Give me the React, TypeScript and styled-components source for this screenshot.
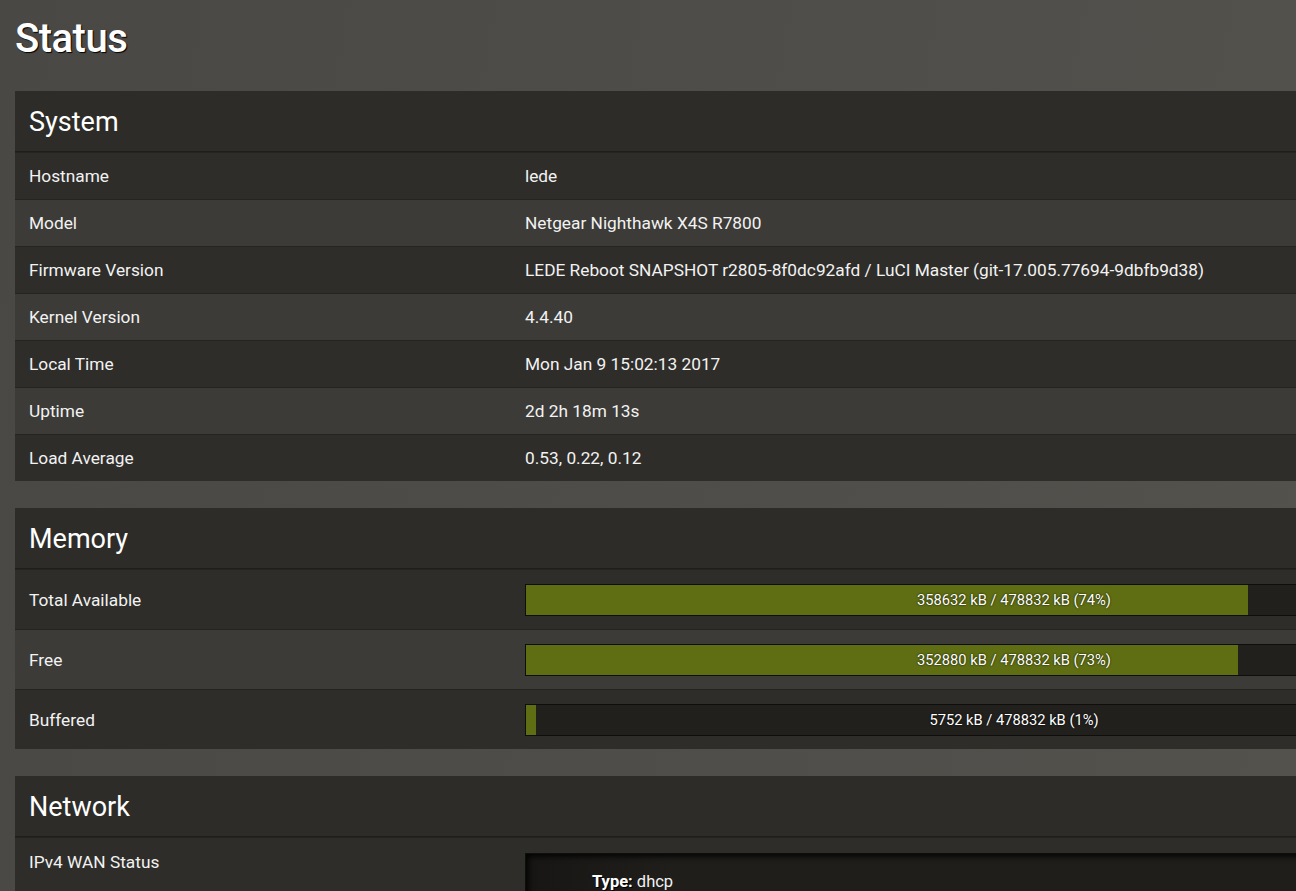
import React from "react";
import styled, { createGlobalStyle } from "styled-components";

const GlobalStyle = createGlobalStyle`
    html, body {
        margin:0;
        padding:0;
        overflow:hidden;
        background:linear-gradient(100deg, #4a4845 0%, #4f4d49 50%, #53524d 100%);
        min-height:100vh;
        font-family:Roboto, "Open Sans", "DejaVu Sans", sans-serif;
        color:#eee;
    }
`
const Page = styled.div`
    padding:14px 0 0 15px;
    width:1500px;
`
const Title = styled.h1`
    margin:0 0 27px 0;
    font-size:40px;
    font-weight:500;
    line-height:50px;
    color:#fff;
    letter-spacing:-0.5px;
    text-shadow:1px 1px 1px #000;
`
const Panel = styled.section`
    background:#2e2c28;
    margin-bottom:27px;
    width:1520px;
`
const PanelHeader = styled.h2`
    margin:0;
    height:61px;
    padding:2px 14px 0;
    box-sizing:border-box;
    display:flex;
    align-items:center;
    font-size:27px;
    font-weight:400;
    color:#fff;
    border-bottom:1px solid #1f1e1b;
    box-shadow:0 1px 0 #44423e;
`
const Row = styled.div<{ $alt?: boolean; $h: number; $top?: boolean }>`
    display:grid;
    grid-template-columns:496px 1fr;
    align-items:${p => p.$top ? "start" : "center"};
    min-height:${p => p.$h}px;
    padding:0 14px;
    box-sizing:border-box;
    background:${p => p.$alt ? "#3c3b37" : "#2e2d29"};
    border-top:1px solid #252420;
    font-size:17.3px;
    color:#f2f2f2;
`
const Label = styled.div<{ $pad?: number }>`
    padding-top:${p => p.$pad ?? 0}px;
`
const Bar = styled.div`
    position:relative;
    width:976px;
    height:30px;
    border:1px solid #0e0e0c;
    background:#21201d;
    display:flex;
    align-items:center;
    justify-content:center;
    font-size:14.7px;
    color:#fff;
    overflow:hidden;
`
const Fill = styled.div`
    position:absolute;
    left:0;
    top:0;
    bottom:0;
    background:#5f6e12;
`
const BarText = styled.span`
    position:relative;
    text-shadow:0 0 2px #000;
`
const WanBox = styled.div`
    margin-top:15px;
    height:60px;
    width:900px;
    border:1px solid #0e0e0c;
    background:linear-gradient(90deg, #171614 0%, #1f1e1b 15%, #1f1e1b 100%);
    box-shadow:inset 2px 2px 6px #000;
    padding:18px 0 0 66px;
    font-size:16.5px;
`
const Key = styled.b`
    font-weight:700;
    color:#fff;
    text-shadow:1px 1px 0 #000;
`

const system = [
    ["Hostname", "lede"],
    ["Model", "Netgear Nighthawk X4S R7800"],
    ["Firmware Version", "LEDE Reboot SNAPSHOT r2805-8f0dc92afd / LuCI Master (git-17.005.77694-9dbfb9d38)"],
    ["Kernel Version", "4.4.40"],
    ["Local Time", "Mon Jan 9 15:02:13 2017"],
    ["Uptime", "2d 2h 18m 13s"],
    ["Load Average", "0.53, 0.22, 0.12"],
]

const memory = [
    { label: "Total Available", used: 358632, pct: 74 },
    { label: "Free", used: 352880, pct: 73 },
    { label: "Buffered", used: 5752, pct: 1 },
]

const App = () => {
    return (
        <>
            <GlobalStyle />
            <Page>
                <Title>Status</Title>
                <Panel>
                    <PanelHeader>System</PanelHeader>
                    {system.map(([k, v], i) => (
                        <Row key={k} $h={47} $alt={i % 2 === 1}>
                            <Label>{k}</Label>
                            <div>{v}</div>
                        </Row>
                    ))}
                </Panel>
                <Panel>
                    <PanelHeader>Memory</PanelHeader>
                    {memory.map((m, i) => (
                        <Row key={m.label} $h={60} $alt={i % 2 === 1}>
                            <Label>{m.label}</Label>
                            <Bar>
                                <Fill style={{ width: `${m.pct}%` }} />
                                <BarText>{m.used} kB / 478832 kB ({m.pct}%)</BarText>
                            </Bar>
                        </Row>
                    ))}
                </Panel>
                <Panel>
                    <PanelHeader>Network</PanelHeader>
                    <Row $h={120} $top>
                        <Label $pad={14}>IPv4 WAN Status</Label>
                        <WanBox>
                            <Key>Type:</Key> dhcp
                        </WanBox>
                    </Row>
                </Panel>
            </Page>
        </>
    )
}
export default App
